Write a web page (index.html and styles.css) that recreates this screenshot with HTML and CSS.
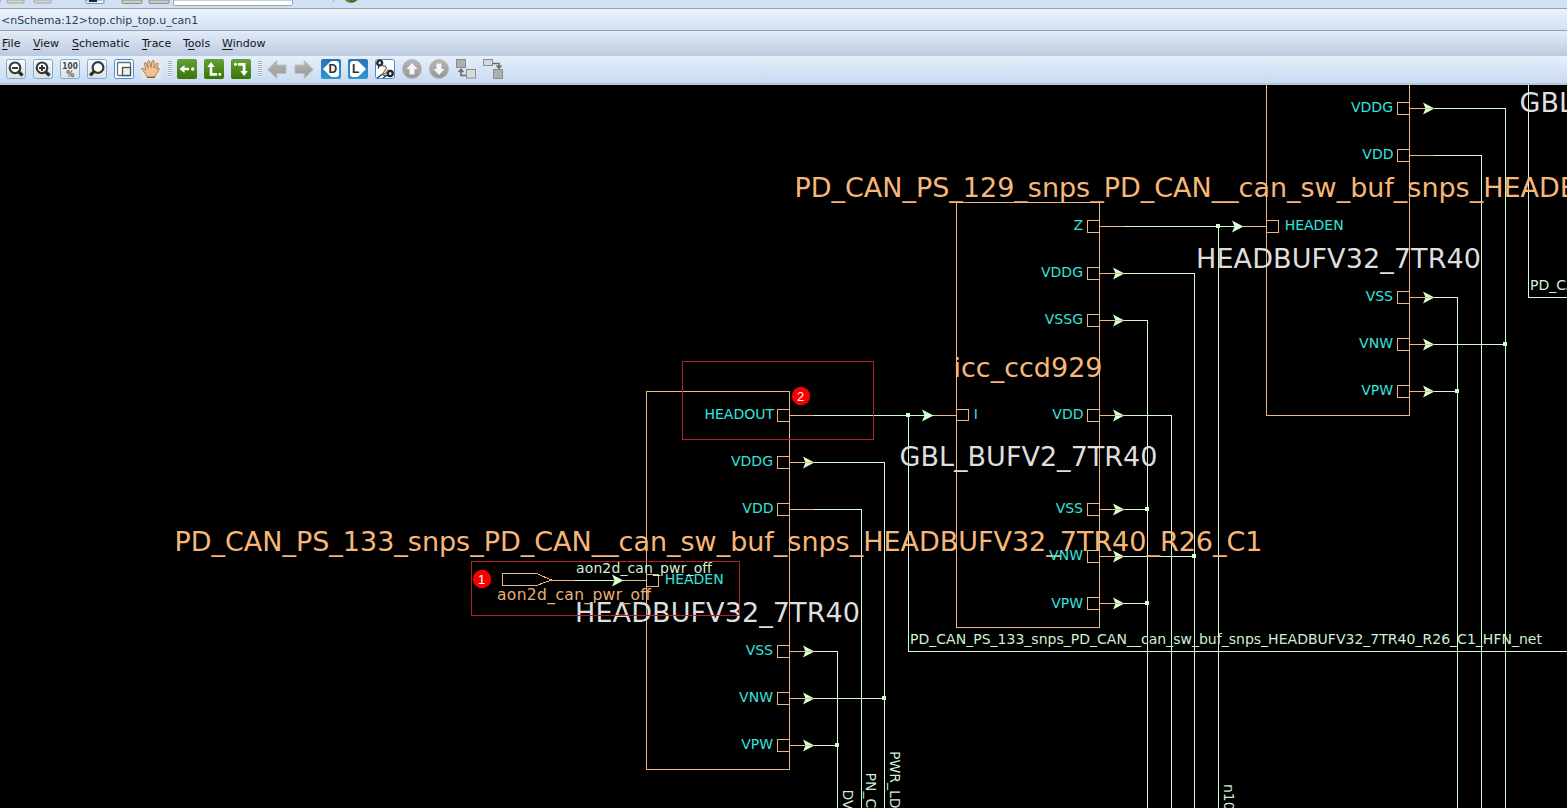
FILE: index.html
```html
<!DOCTYPE html>
<html lang="en">
<head>
<meta charset="utf-8">
<title>nSchema</title>
<link rel="stylesheet" href="styles.css">
</head>
<body>
<div class="window">
  <div class="parent-bar">
    <svg class="parent-icons" width="400" height="8" viewBox="0 0 400 8">
      <path d="M0 0h1v2H0z" fill="#9aa6b8"/>
      <path d="M7 0v2q0 1 1 1h15q1 0 1-1V0zM34 0v2q0 1 1 1h15q1 0 1-1V0z" fill="#d5d7d4" stroke="#a3a5a0"/>
      <path d="M86 0v2q0 1.500 1 1.500h16q1 0 1-1.500V0z" fill="#eef4fa" stroke="#5b9bd0"/><path d="M89 0h8v2h-8z" fill="#223"/>
      <path d="M122 0v2q0 1.500 1 1.500h18q1 0 1-1.500V0zM149 0v2q0 1.500 1 1.500h18q1 0 1-1.500V0z" fill="#c9c9c5" stroke="#8f918c"/>
      <path d="M173.500 0v4.500q0 1 1 1h117q1 0 1-1V0z" fill="#fff" stroke="#98a4b8"/>
      <path d="M333.500 0v2" stroke="#a9b5c8"/>
      <path d="M345 0q2 3 6 3t7-3z" fill="#4d8f3c"/><path d="M350 0l3 2 2-2" stroke="#244d24" fill="none"/>
    </svg>
  </div>
  <div class="title">&lt;nSchema:12&gt;top.chip_top.u_can1</div>
  <nav class="menu">
    <span class="m-file"><u>F</u>ile</span><span class="m-view"><u>V</u>iew</span><span class="m-schematic"><u>S</u>chematic</span><span class="m-trace"><u>T</u>race</span><span class="m-tools">T<u>o</u>ols</span><span><u>W</u>indow</span>
  </nav>
  <div class="toolbar">
    <svg class="ico" viewBox="0 0 20 20"><use href="#btn"/><circle cx="9" cy="8.800" r="5.300" class="lens"/><path d="M12.800 12.800l3.700 3.700" class="grip"/><path d="M6 9h6" class="mark"/></svg>
    <svg class="ico" viewBox="0 0 20 20"><use href="#btn"/><circle cx="9" cy="8.800" r="5.300" class="lens"/><path d="M12.800 12.800l3.700 3.700" class="grip"/><path d="M6 9h6M9 6v6" class="mark"/></svg>
    <svg class="ico" viewBox="0 0 20 20"><use href="#btn"/><text x="2.300" y="9.500" class="hundred" textLength="15.500" lengthAdjust="spacingAndGlyphs">100</text><text x="6.200" y="17.500" class="pct" textLength="8" lengthAdjust="spacingAndGlyphs">%</text></svg>
    <svg class="ico" viewBox="0 0 20 20"><use href="#btn"/><circle cx="11" cy="8.500" r="5.400" class="lens"/><path d="M7.200 12.300l-4 4" class="grip"/></svg>
    <svg class="ico" viewBox="0 0 20 20"><rect x=".5" y=".5" width="19" height="19" rx="2" fill="#f9fbfd" stroke="#458fce"/><rect x="3.500" y="3.500" width="13" height="13" rx="1" fill="#fff" stroke="#6c7076" stroke-width="1.300"/><rect x="8.500" y="8.500" width="8" height="8" fill="#eee" stroke="#4b4f55" stroke-width="1.300"/></svg>
    <svg class="ico" viewBox="0 0 20 20"><rect width="20" height="20" fill="#eee9e8" opacity=".7"/><path d="M6 18L4 14 .8 10.500q-.5-1.500 1-1.500l3 2.200L3.500 5q0-1.700 1.500-1.300L7 9 6.700 2.500Q7.500.7 8.600 2.200L10 8.500l1-6.500q1.200-1.500 2.200.2L13 9l2.600-4.700q1.600-.8 1.600.9L15.600 10l1.700-1q1.400.2.900 1.300L15 15.500 13.700 18z" fill="#f1c293" stroke="#a06f48" stroke-width=".8"/><path d="M6 18.500h8" stroke="#7d553a"/></svg>
    <i class="handle"></i>
    <svg class="ico" viewBox="0 0 20 20"><use href="#gbtn"/><path d="M2.500 10l5-4v2.700H12v2.600H7.500V14z" fill="#fff"/><circle cx="15.700" cy="10" r="1.700" fill="#fff"/></svg>
    <svg class="ico" viewBox="0 0 20 20"><use href="#gbtn"/><path d="M7 3l3.700 5H8.300v6H13v2.700H5.700V8H3.300z" fill="#fff"/><circle cx="15.800" cy="15.300" r="1.500" fill="#fff"/></svg>
    <svg class="ico" viewBox="0 0 20 20"><use href="#gbtn"/><circle cx="4.500" cy="5.300" r="1.500" fill="#fff"/><path d="M7 4h7.500v8h2.300l-3.700 5-3.700-5h2.300V6.700H7z" fill="#fff"/></svg>
    <i class="handle"></i>
    <svg class="ico" viewBox="0 0 20 20"><path d="M.8 10.500l9-9V6H19v8.500H9.800v5z" fill="url(#gray)" stroke="#bfc0bf"/></svg>
    <svg class="ico" viewBox="0 0 20 20"><path d="M19.200 10.500l-9-9V6H1v8.500h9.200v5z" fill="url(#gray)" stroke="#bfc0bf"/></svg>
    <svg class="ico" viewBox="0 0 20 20"><use href="#bbtn"/><path d="M2 10l7-7q1-1 2.500-1H15q3 0 3 3v10q0 3-3 3h-3.500q-1.500 0-2.500-1z" fill="#fff"/><text x="7.500" y="14.300" class="letter">D</text></svg>
    <svg class="ico" viewBox="0 0 20 20"><use href="#bbtn"/><path d="M18 10l-7-7q-1-1-2.500-1H5Q2 2 2 5v10q0 3 3 3h3.500q1.500 0 2.500-1z" fill="#fff"/><text x="4" y="14.300" class="letter">L</text></svg>
    <svg class="ico" viewBox="0 0 20 20"><rect x=".5" y=".5" width="19" height="19" rx="2" fill="#fff" stroke="#458fce"/><circle cx="4.700" cy="4" r="2.500" class="node"/><circle cx="15.200" cy="14.500" r="2.600" class="node"/><path d="M4.500 6.500L3 9.500M2 19l5-3.500 4 1.500M12.500 16L8 19" fill="none" stroke="#333" stroke-width="1.300"/><path d="M6.500 6.500q4 0 5 2.500L7.500 15l3-.5 3-4" fill="none" stroke="#777" stroke-width="1.300"/></svg>
    <svg class="ico" viewBox="0 0 20 20"><circle cx="10" cy="10" r="9.500" fill="url(#gray)" stroke="#b9b9b9"/><path d="M10 4l5.500 6h-3v5.500h-5V10h-3z" fill="#f5f5f5"/></svg>
    <svg class="ico" viewBox="0 0 20 20"><circle cx="10" cy="10" r="9.500" fill="url(#gray)" stroke="#b9b9b9"/><path d="M10 16l5.500-6h-3V4.500h-5V10h-3z" fill="#f5f5f5"/></svg>
    <svg class="ico" viewBox="0 0 20 20"><rect x=".5" y=".5" width="9" height="8" fill="#aeb0b0" stroke="#8b8d8d"/><rect x="10.500" y="10.500" width="9" height="8.500" fill="#d7dadc" stroke="#8b8d8d"/><path d="M10 16.500H5V11M2.500 13L5 10.500 7.500 13" fill="none" stroke="#696b6b" stroke-width="1.600"/></svg>
    <svg class="ico" viewBox="0 0 20 20"><rect x=".5" y=".5" width="9" height="6" fill="#d7dadc" stroke="#8b8d8d"/><rect x="10.500" y="10.500" width="9" height="9" fill="#aeb0b0" stroke="#8b8d8d"/><path d="M10 4.500h6V9M13.500 6.500L16 9l2.500-2.500" fill="none" stroke="#696b6b" stroke-width="1.600"/></svg>
  </div>
  <svg class="schematic" width="1567" height="723" viewBox="0 85 1567 723">
    <defs>
      <linearGradient id="green" x2="0" y2="1"><stop stop-color="#65a136"/><stop offset="1" stop-color="#397408"/></linearGradient>
      <linearGradient id="blue" x2="0" y2="1"><stop stop-color="#2875b7"/><stop offset="1" stop-color="#2f96d3"/></linearGradient>
      <linearGradient id="gray" x2="0" y2="1"><stop stop-color="#b6b6b6"/><stop offset="1" stop-color="#979797"/></linearGradient>
      <linearGradient id="face" x2="0" y2="1"><stop stop-color="#fdfdfd"/><stop offset="1" stop-color="#dedede"/></linearGradient>
      <g id="btn"><rect x=".5" y=".5" width="19" height="19" rx="2" fill="url(#face)" stroke="#73aede"/></g>
      <g id="gbtn"><rect width="20" height="20" rx="2" fill="url(#green)"/></g>
      <g id="bbtn"><rect width="20" height="20" rx="2" fill="url(#blue)"/></g>
      <path id="arrow" d="M-.5-6L11 0-.5 6 2 0z"/>
      <rect id="dot" x="-2.500" y="-2.500" width="4" height="4"/>
      <!-- output pin: box, orange stub -->
      <path id="pin" d="M0-6h-12V6H0M0 0h24"/>
    </defs>
    <g transform="translate(.5 .5)">
      <g class="net">
        <path d="M813 415H933M813 462H884V810M813 509H861V810M813 651H837V810M813 698H884M813 745H837"/>
        <path d="M908 415V651H1570M574 580H613"/>
        <path d="M1123 226H1235M1218 226V810M1123 273H1194V810M1123 320H1147V810M1123 415H1171V810M1123 509H1147M1123 556H1194M1123 603H1147"/>
        <path d="M1433 108H1505V810M1433 155H1481V810M1433 297H1457V810M1433 344H1505M1433 391H1457M1528 80V297H1570"/>
      </g>
      <g class="fill">
        <use href="#arrow" x="803" y="462"/><use href="#arrow" x="803" y="651"/><use href="#arrow" x="803" y="698"/><use href="#arrow" x="803" y="745"/>
        <use href="#arrow" x="1113" y="273"/><use href="#arrow" x="1113" y="320"/><use href="#arrow" x="1113" y="415"/><use href="#arrow" x="1113" y="509"/><use href="#arrow" x="1113" y="556"/><use href="#arrow" x="1113" y="603"/>
        <use href="#arrow" x="1423" y="108"/><use href="#arrow" x="1423" y="297"/><use href="#arrow" x="1423" y="344"/><use href="#arrow" x="1423" y="391"/>
      </g>
      <g class="cell">
        <path d="M646 391H789V769H646zM956 202H1099V627H956zM1266 80V415H1409V80"/>
        <use href="#pin" x="789" y="415"/><use href="#pin" x="789" y="462"/><use href="#pin" x="789" y="509"/><use href="#pin" x="789" y="651"/><use href="#pin" x="789" y="698"/><use href="#pin" x="789" y="745"/>
        <use href="#pin" x="1099" y="226"/><use href="#pin" x="1099" y="273"/><use href="#pin" x="1099" y="320"/><use href="#pin" x="1099" y="415"/><use href="#pin" x="1099" y="509"/><use href="#pin" x="1099" y="556"/><use href="#pin" x="1099" y="603"/>
        <use href="#pin" x="1409" y="108"/><use href="#pin" x="1409" y="155"/><use href="#pin" x="1409" y="297"/><use href="#pin" x="1409" y="344"/><use href="#pin" x="1409" y="391"/>
        <path d="M646 574H658V586H646M956 409H968V420H956M1266 220H1278V232H1266"/>
        <path d="M502 573H536L551 579.500 536 585H502zM551 580H574M622 580H646M932 415H956M1242 226H1266"/>
      </g>
      <g class="fill">
        <use href="#arrow" x="612" y="580"/><use href="#arrow" x="922" y="415"/><use href="#arrow" x="1232" y="226"/>
        <use href="#dot" x="884" y="698"/><use href="#dot" x="837" y="745"/><use href="#dot" x="908" y="415"/><use href="#dot" x="1218" y="226"/><use href="#dot" x="1147" y="509"/><use href="#dot" x="1194" y="556"/><use href="#dot" x="1147" y="603"/><use href="#dot" x="1505" y="344"/><use href="#dot" x="1457" y="391"/>
      </g>
    </g>
    <g class="name">
      <text x="174.500" y="551" textLength="1088">PD_CAN_PS_133_snps_PD_CAN__can_sw_buf_snps_HEADBUFV32_7TR40_R26_C1</text>
      <text x="794.500" y="197" textLength="1088">PD_CAN_PS_129_snps_PD_CAN__can_sw_buf_snps_HEADBUFV32_7TR40_R26_C1</text>
      <text x="953.500" y="377" textLength="149">icc_ccd929</text>
    </g>
    <g class="type">
      <text x="575" y="622" textLength="285">HEADBUFV32_7TR40</text>
      <text x="1196" y="268" textLength="285">HEADBUFV32_7TR40</text>
      <text x="899.500" y="466" textLength="258">GBL_BUFV2_7TR40</text>
      <text x="1519.500" y="112" textLength="258">GBL_BUFV2_7TR40</text>
    </g>
    <g class="port">
      <text x="774" y="419">HEADOUT</text><text x="773" y="466">VDDG</text><text x="773.500" y="513">VDD</text><text x="773" y="655">VSS</text><text x="773" y="702">VNW</text><text x="773" y="749">VPW</text>
      <text x="1083" y="230">Z</text><text x="1083" y="277">VDDG</text><text x="1083" y="324">VSSG</text><text x="1083.500" y="419">VDD</text><text x="1083" y="513">VSS</text><text x="1083" y="560">VNW</text><text x="1083" y="608">VPW</text>
      <text x="1393" y="112">VDDG</text><text x="1393.500" y="159">VDD</text><text x="1393" y="301">VSS</text><text x="1393" y="348">VNW</text><text x="1393" y="395">VPW</text>
      <text x="723.700" y="584">HEADEN</text><text x="1343.700" y="230">HEADEN</text><text x="978" y="419">I</text>
    </g>
    <g class="label">
      <text x="576" y="573" textLength="136">aon2d_can_pwr_off</text>
      <text x="910" y="644" textLength="632">PD_CAN_PS_133_snps_PD_CAN__can_sw_buf_snps_HEADBUFV32_7TR40_R26_C1_HFN_net</text>
      <text x="1530" y="290">PD_CAN_PS</text>
      <text transform="translate(890 751) rotate(90)">PWR_LDO</text>
      <text transform="translate(866 772.500) rotate(90)">PN_CAN</text>
      <text transform="translate(843 789.500) rotate(90)">DVSS</text>
      <text transform="translate(1224 784) rotate(90)">n100</text>
    </g>
    <text x="497" y="600" class="input" textLength="154">aon2d_can_pwr_off</text>
    <path d="M682.500 361.500h191v78h-191zM471.500 561.500h268v54h-268z" class="callout"/>
    <g class="badge"><circle cx="482" cy="579" r="9.200"/><circle cx="801" cy="396" r="9.200"/><text x="481.700" y="583.500">1</text><text x="800.500" y="400.500">2</text></g>
  </svg>
</div>
</body>
</html>
```

FILE: styles.css
```css
body { margin: 0; background: #000; overflow: hidden; }
.window { display: flex; flex-direction: column; width: 1567px; height: 808px; font-family: "DejaVu Sans", sans-serif; font-size: 11px; color: #10151c; }
.parent-bar { box-sizing: border-box; height: 9px; background: #d2e0f4; border-bottom: 1px solid #9b9ca6; }
.parent-icons { display: block; }
.title { box-sizing: border-box; height: 22px; padding: 2px 0 0 1px; line-height: 20px; letter-spacing: -0.03px; color: #333d49; background: linear-gradient(#edf4fc, #cfe0f6); border-bottom: 1px solid #a39aa9; }
.menu { display: flex; box-sizing: border-box; height: 25px; padding: 1px 0 0 2px; line-height: 24px; background: linear-gradient(#e3ecf7, #bccadf); }
.menu u { text-underline-offset: 2px; text-decoration-thickness: 1px; }
.m-file { width: 31px; }
.m-view { width: 39px; }
.m-schematic { width: 70px; }
.m-trace { width: 41px; }
.m-tools { width: 39px; }
.toolbar { display: flex; gap: 7px; box-sizing: border-box; height: 29px; padding: 3px 0 0 6px; background: linear-gradient(#e6effb, #c8daf2); border-bottom: 2px solid #b9c6d8; }
.ico { flex: none; width: 20px; height: 20px; }
.handle { width: 4px; height: 16px; margin: 2px -2px 0 0; background: repeating-linear-gradient(#a2adbd 0 1px, #eef4fb 1px 2px); }
.lens { fill: #fff; stroke: #3a3a3a; stroke-width: 2.2; }
.grip { fill: none; stroke: #2f2f2f; stroke-width: 3.2; }
.mark { stroke: #333; stroke-width: 1.9; }
.hundred { font-size: 8.5px; font-weight: bold; fill: #444; }
.pct { font-size: 8.5px; font-weight: bold; fill: #555; }
.letter { font: bold 12px "Liberation Sans", sans-serif; fill: #333; }
.node { fill: #ddd; stroke: #222; stroke-width: 2.2; }
.schematic { display: block; flex: none; background: #000; }
.net { fill: none; stroke: #d2fbd6; shape-rendering: crispEdges; }
.cell { fill: none; stroke: #e9b684; shape-rendering: crispEdges; }
.fill { fill: #d4ffd2; }
.name { font-size: 27px; fill: #f7b779; }
.type { font-size: 27px; fill: #dedede; }
.port { font-size: 14px; fill: #35e3de; text-anchor: end; }
.label { font-size: 14px; fill: #cff0d2; }
.input { font-size: 15.5px; fill: #e9b077; }
.callout { fill: none; stroke: #b0222a; shape-rendering: crispEdges; }
.badge { fill: #f90000; }
.badge text { fill: #fff; font: 13px "Liberation Sans", sans-serif; text-anchor: middle; }
```
